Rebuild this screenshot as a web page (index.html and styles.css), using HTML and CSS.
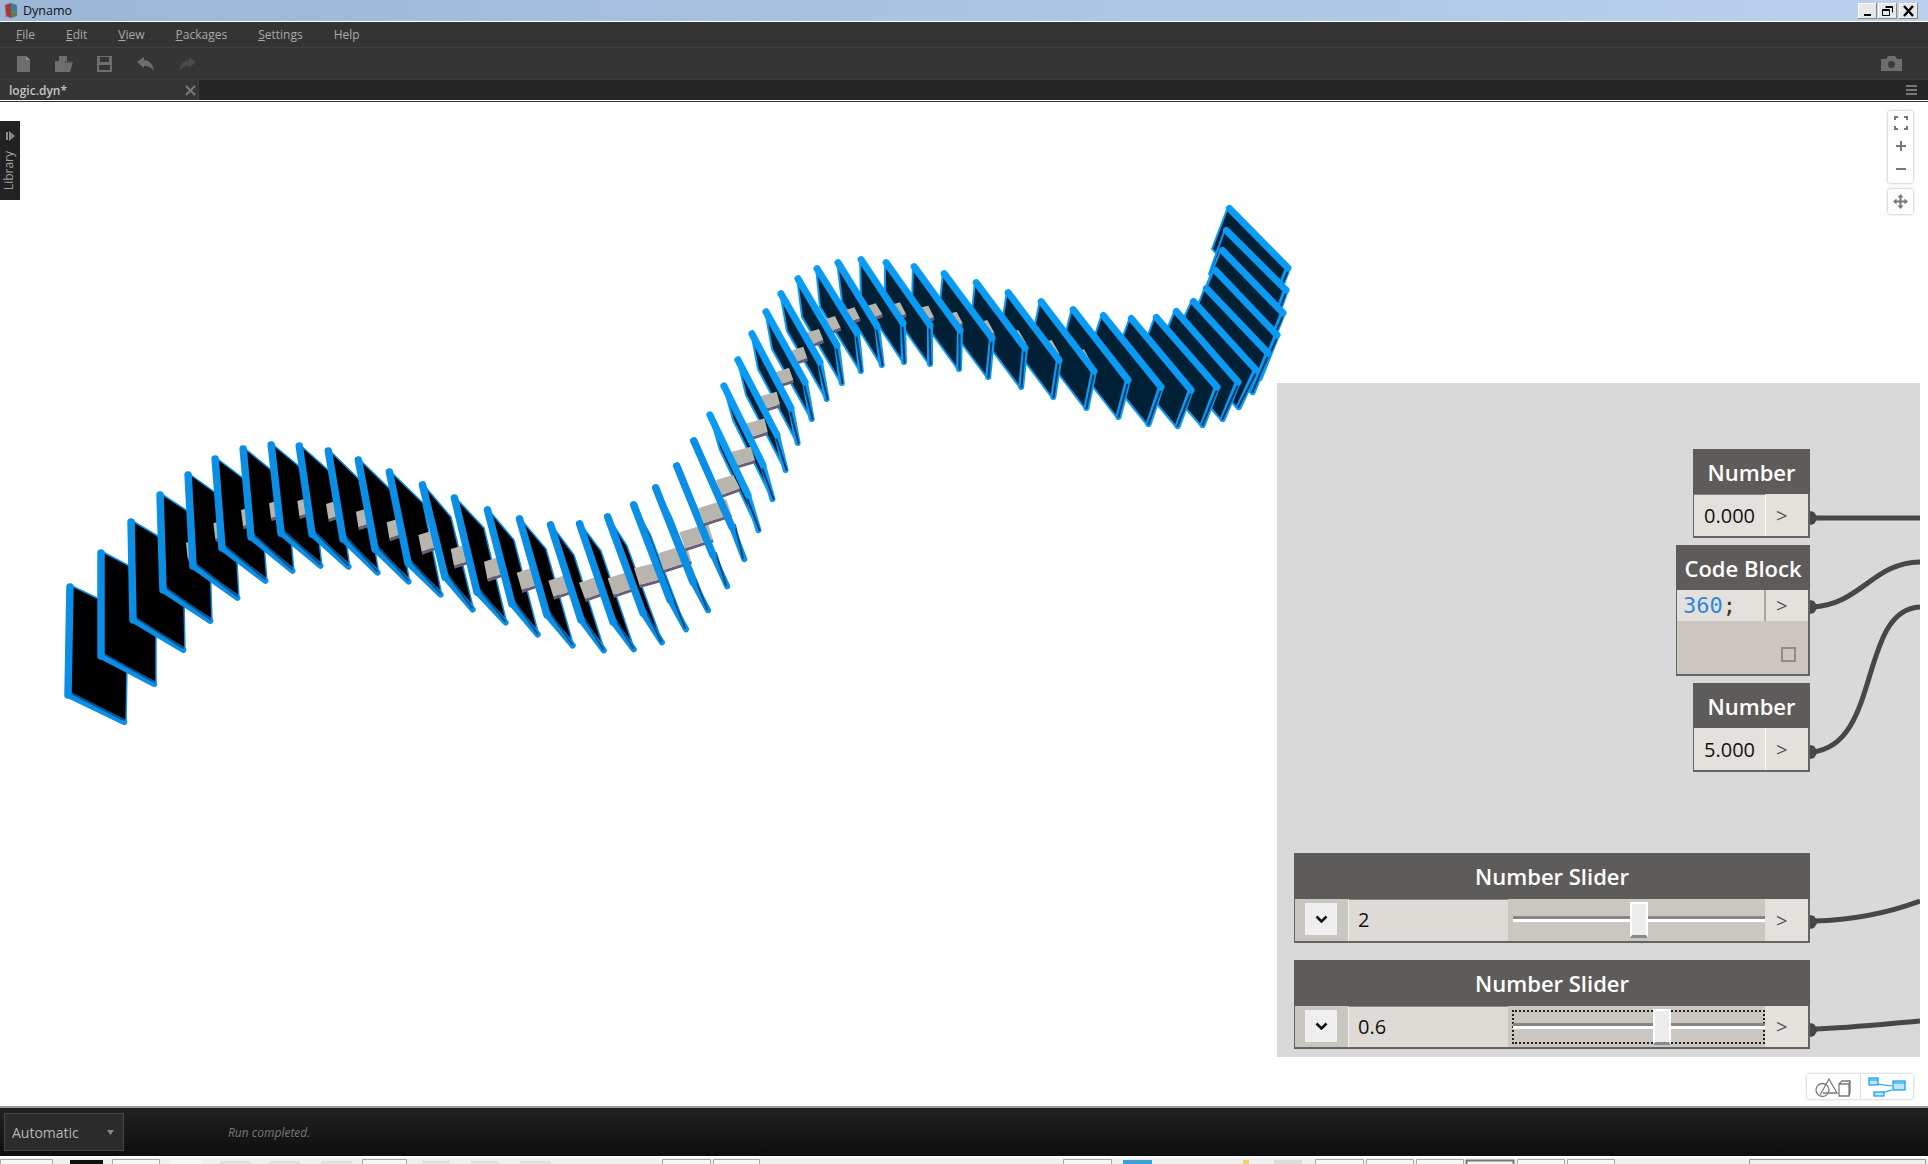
FILE: index.html
```html
<!DOCTYPE html>
<html lang="en">
<head>
    <meta charset="UTF-8">
    <title>Dynamo</title>
    <link rel="stylesheet" href="styles.css">
</head>
<body>

    <div class="titlebar">
        <svg class="app-icon" width="14" height="16" viewBox="0 0 14 16">
            <polygon points="0,2 6,0 6,15 1,13" fill="#a83a3a"/>
            <polygon points="6,0 12,2 12,8 6,9" fill="#3c7f9c"/>
            <polygon points="6,9 12,8 12,13 6,15" fill="#5d7a58"/>
            <circle cx="1" cy="13" r="1" fill="#e05a5a"/>
            <circle cx="12" cy="2" r="1" fill="#7ab5e0"/>
        </svg>
        <span class="app-name">Dynamo</span>
        <div class="win-btns">
            <div class="win-btn"><svg width="17" height="14" viewBox="0 0 17 14"><rect x="5" y="10" width="7" height="2" fill="#000"/></svg></div>
            <div class="win-btn"><svg width="17" height="14" viewBox="0 0 17 14"><path d="M6.500 2.500h7v6M3.500 5.500h7v6h-7z M3.500 6.500h7 M6.500 3.500h7" fill="none" stroke="#000"/></svg></div>
            <div class="win-btn win-close"><svg width="17" height="14" viewBox="0 0 17 14"><path d="M4 2l9 10M13 2l-9 10" stroke="#000" stroke-width="2.400"/></svg></div>
        </div>
    </div>

    <div class="menubar">
        <span class="menu-item"><u>F</u>ile</span>
        <span class="menu-item"><u>E</u>dit</span>
        <span class="menu-item"><u>V</u>iew</span>
        <span class="menu-item"><u>P</u>ackages</span>
        <span class="menu-item"><u>S</u>ettings</span>
        <span class="menu-item">Help</span>
    </div>

    <div class="toolbar">
        <svg class="tool" width="14" height="16" viewBox="0 0 14 16"><path d="M0 0h9l4 4v12H0z" fill="#6e6e6e"/><path d="M9 0l4 4H9z" fill="#8c8c8c"/></svg>
        <svg class="tool" width="20" height="16" viewBox="0 0 20 16"><path d="M5 0h8v5h4l2 1-3 10H1V5h4z" fill="#6e6e6e"/><path d="M11 6h8" stroke="#353535"/></svg>
        <svg class="tool" width="16" height="16" viewBox="0 0 16 16"><path d="M0 0h15v16H0z" fill="#6e6e6e"/><rect x="3" y="1" width="9" height="5" fill="#353535"/><rect x="2" y="9" width="11" height="5" fill="#353535"/></svg>
        <svg class="tool tool-undo" width="18" height="14" viewBox="0 0 18 14"><path d="M0 5l7-5v3c5 0 9 4 10 11-3-4-6-5-10-5v2z" fill="#6e6e6e"/></svg>
        <svg class="tool" width="18" height="14" viewBox="0 0 18 14"><path d="M18 5l-7-5v3C6 3 2 7 1 14c3-4 6-5 10-5v2z" fill="#4a4a4a"/></svg>
        <svg class="camera" width="21" height="15" viewBox="0 0 21 15"><path d="M0 3h5l2-3h7l2 3h5v12H0z" fill="#6e6e6e"/><circle cx="10.500" cy="8.500" r="3.400" fill="#3a3a3a"/></svg>
    </div>

    <div class="tabrow">
        <div class="tab">
            <span class="tab-name">logic.dyn*</span>
            <svg width="11" height="11" viewBox="0 0 11 11"><path d="M1 1l9 9M10 1l-9 9" stroke="#7a7a7a" stroke-width="2"/></svg>
        </div>
        <svg class="tab-menu" width="11" height="10" viewBox="0 0 11 10"><path d="M0 1h11M0 5h11M0 9h11" stroke="#777" stroke-width="2"/></svg>
    </div>
    <div class="tabline"></div>

    <div class="canvas">
        <svg id="scene" class="scene" viewBox="0 102 1928 1004"></svg>

        <div class="library">
            <svg width="9" height="10" viewBox="0 0 9 10"><path d="M0 1h2v8H0zM3 0l6 5-6 5z" fill="#8a8a8a"/></svg>
            <span class="library-label">Library</span>
        </div>

        <div class="zoom-box zoom-main">
            <svg width="14" height="14" viewBox="0 0 14 14"><path d="M1 4V1h3M10 1h3v3M13 10v3h-3M4 13H1v-3" fill="none" stroke="#777" stroke-width="2"/></svg>
            <svg width="12" height="12" viewBox="0 0 12 12"><path d="M6 1v10M1 6h10" stroke="#777" stroke-width="2"/></svg>
            <svg width="12" height="12" viewBox="0 0 12 12"><path d="M1 6h10" stroke="#777" stroke-width="2"/></svg>
        </div>
        <div class="zoom-box zoom-pan">
            <svg width="15" height="15" viewBox="0 0 15 15"><path d="M7.500 0l3 3.500h-2V6.500h3v-2l3.500 3-3.500 3v-2h-3v3h2l-3 3.500-3-3.500h2v-3h-3v2L0 7.500l3.500-3v2h3v-3h-2z" fill="#777"/></svg>
        </div>

        <div class="workspace">
            <svg class="wires" viewBox="1277 383 643 674">
                <g fill="none" stroke="#474747" stroke-width="5">
                    <path d="M1812 518H1920"/>
                    <path d="M1812 607C1862 604 1872 563 1920 562"/>
                    <path d="M1812 752C1882 745 1858 610 1920 607"/>
                    <path d="M1814 921C1850 920 1885 914 1920 901"/>
                    <path d="M1814 1029C1850 1028 1885 1024 1920 1021"/>
                </g>
                <g fill="#474747">
                    <path d="M1810 511l4 1 4 6-4 6-4 1z"/>
                    <path d="M1810 600l4 1 4 6-4 6-4 1z"/>
                    <path d="M1810 745l4 1 4 6-4 6-4 1z"/>
                    <path d="M1810 915l4 1 4 6-4 6-4 1z"/>
                    <path d="M1810 1023l4 1 4 6-4 6-4 1z"/>
                </g>
            </svg>

            <div class="node node-number number-a">
                <div class="node-head">Number</div>
                <div class="node-body">
                    <div class="node-value">0.000</div>
                    <div class="node-port">&gt;</div>
                </div>
            </div>

            <div class="node node-code">
                <div class="node-head">Code Block</div>
                <div class="code-row">
                    <div class="code-text"><span class="code-num">360</span>;</div>
                    <div class="node-port">&gt;</div>
                </div>
                <div class="code-foot"><div class="code-check"></div></div>
            </div>

            <div class="node node-number number-b">
                <div class="node-head">Number</div>
                <div class="node-body">
                    <div class="node-value">5.000</div>
                    <div class="node-port">&gt;</div>
                </div>
            </div>

            <div class="node node-slider slider-a">
                <div class="node-head">Number Slider</div>
                <div class="slider-body">
                    <div class="slider-drop">
                        <div class="drop-btn"><svg width="13" height="9" viewBox="0 0 13 9"><path d="M1.500 1.500l5 5 5-5" fill="none" stroke="#111" stroke-width="2.600"/></svg></div>
                    </div>
                    <div class="slider-value">2</div>
                    <div class="slider-track">
                        <div class="track-line"></div>
                        <div class="thumb thumb-a"></div>
                    </div>
                    <div class="node-port">&gt;</div>
                </div>
            </div>

            <div class="node node-slider slider-b">
                <div class="node-head">Number Slider</div>
                <div class="slider-body">
                    <div class="slider-drop">
                        <div class="drop-btn"><svg width="13" height="9" viewBox="0 0 13 9"><path d="M1.500 1.500l5 5 5-5" fill="none" stroke="#111" stroke-width="2.600"/></svg></div>
                    </div>
                    <div class="slider-value">0.6</div>
                    <div class="slider-track">
                        <div class="track-focus"></div>
                        <div class="track-line"></div>
                        <div class="thumb thumb-b"></div>
                    </div>
                    <div class="node-port">&gt;</div>
                </div>
            </div>
        </div>

        <div class="view-toggle">
            <div class="toggle-cell">
                <svg width="36" height="22" viewBox="0 0 36 22"><g fill="none" stroke="#7a7a7a" stroke-width="1.300"><circle cx="7.500" cy="14" r="6.500"/><path d="M5 19L14 3l8 14H8"/><path d="M24 8h10v12H24zM24 8l3-3h8v12l-1 3M34 8l1-3"/></g></svg>
            </div>
            <div class="toggle-cell">
                <svg width="38" height="20" viewBox="0 0 38 20"><g stroke="#0a9bf5" stroke-width="1.200" fill="#bfe3fb"><path d="M9 7L24 9M10 17L24 13" fill="none"/><rect x="1" y="1" width="9" height="7"/><rect x="25" y="4" width="12" height="9"/><rect x="6" y="15" width="10" height="4"/><path d="M1 3h9M25 6h12" fill="none"/></g></svg>
            </div>
        </div>
    </div>

    <div class="statusbar">
        <div class="run-select">
            <span>Automatic</span>
            <svg width="7" height="5" viewBox="0 0 7 5"><path d="M0 0h7L3.500 5z" fill="#888"/></svg>
        </div>
        <span class="run-status">Run completed.</span>
    </div>

    <div class="taskstrip">
        <svg width="1928" height="6" viewBox="0 1158 1928 6">
            <g fill="#e2e2e2">
                <rect x="170" y="1160" width="32" height="4" fill="#f6f6f6"/>
                <rect x="220" y="1161" width="31" height="3"/>
                <rect x="269" y="1161" width="31" height="3"/>
                <rect x="321" y="1161" width="31" height="3"/>
                <rect x="422" y="1161" width="28" height="3"/>
                <rect x="471" y="1161" width="28" height="3"/>
                <rect x="520" y="1161" width="31" height="3"/>
                <rect x="1274" y="1160" width="28" height="4" fill="#dcdcdc"/>
            </g>
            <g fill="#f6f6f6" stroke="#a8a8a8">
                <path d="M0.500 1164v-4.500h52v4.500"/>
                <path d="M112.500 1164v-4.500h47v4.500"/>
                <path d="M362.500 1164v-4.500h44v4.500"/>
                <path d="M662.500 1164v-4.500h48v4.500"/>
                <path d="M713.500 1164v-4.500h46v4.500"/>
                <path d="M1063.500 1164v-4.500h48v4.500"/>
                <path d="M1315.500 1164v-4.500h48v4.500"/>
                <path d="M1366.500 1164v-4.500h47v4.500"/>
                <path d="M1416.500 1164v-4.500h47v4.500"/>
                <path d="M1466.500 1164v-3.500h47v3.500" stroke="#777" stroke-width="2"/>
                <path d="M1517.500 1164v-4.500h47v4.500"/>
                <path d="M1567.500 1164v-4.500h47v4.500"/>
                <path d="M1749.500 1164v-4.500h176v4.500" fill="#f0f0f0" stroke="#999"/>
            </g>
            <rect x="70" y="1160" width="33" height="4" fill="#111"/>
            <rect x="1123" y="1160" width="29" height="4" fill="#3ba0dc"/>
            <rect x="1243" y="1160" width="6" height="4" fill="#f2d25a"/>
        </svg>
    </div>

    <script src="scene.js"></script>
</body>
</html>
```

FILE: styles.css
```css
body {
    margin: 0;
    width: 1928px;
    height: 1164px;
    overflow: hidden;
    display: flex;
    flex-direction: column;
    background-color: #ffffff;
    font-family: "Open Sans", sans-serif;
}

/* --- window chrome --- */
.titlebar {
    height: 21px;
    flex: none;
    display: flex;
    align-items: center;
    padding-left: 5px;
    background: linear-gradient(to right, #9bb6d6, #b9d1ec);
    border-bottom: 1px solid #ffffff;
}

.app-name {
    margin-left: 4px;
    font-size: 12.5px;
    color: #111111;
}

.win-btns {
    margin-left: auto;
    margin-right: 10px;
    display: flex;
    gap: 1px;
}

.win-btn {
    width: 19px;
    height: 16px;
    display: flex;
    align-items: center;
    justify-content: center;
    background-color: #e6e8ea;
    box-shadow: inset -1px -1px 0 #8a8a8a, inset 1px 1px 0 #ffffff;
}

.win-close {
    margin-left: 1px;
}

.menubar {
    height: 25px;
    flex: none;
    display: flex;
    align-items: center;
    gap: 31px;
    padding-left: 16px;
    background-color: #343434;
    border-bottom: 1px solid #3f3f3f;
    font-size: 12px;
    color: #a8a8a8;
}

.toolbar {
    height: 31px;
    flex: none;
    display: flex;
    align-items: center;
    padding-left: 17px;
    gap: 23px;
    background-color: #353535;
    border-bottom: 1px solid #3c3c3c;
}

.tool-undo {
    margin-left: 1px;
}

.camera {
    margin-left: auto;
    margin-right: 26px;
}

.tabrow {
    height: 20px;
    flex: none;
    display: flex;
    align-items: center;
    justify-content: space-between;
    background-color: #262626;
}

.tab {
    width: 199px;
    height: 20px;
    display: flex;
    align-items: center;
    justify-content: space-between;
    padding: 0 2px 0 9px;
    box-sizing: border-box;
    background-color: #353535;
    border-right: 1px solid #3f3f3f;
}

.tab-name {
    font-size: 12px;
    font-weight: 600;
    color: #c4c4c4;
}

.tab-menu {
    margin-right: 11px;
}

.tabline {
    height: 1px;
    flex: none;
    background-color: #ffffff;
    border-bottom: 1px solid #333333;
}

/* --- canvas --- */
.canvas {
    position: relative;
    height: 1004px;
    flex: none;
    overflow: hidden;
    background-color: #ffffff;
    border-bottom: 2px solid #999999;
}

.scene {
    position: absolute;
    left: 0;
    top: 0;
    width: 1928px;
    height: 1004px;
}

.library {
    position: absolute;
    left: 0;
    top: 19px;
    width: 20px;
    height: 79px;
    background-color: #222222;
    display: flex;
    flex-direction: column;
    align-items: center;
    padding-top: 10px;
    box-sizing: border-box;
    gap: 10px;
}

.library-label {
    writing-mode: vertical-rl;
    transform: rotate(180deg);
    font-size: 12px;
    line-height: 14px;
    margin-right: 2px;
    color: #a0a0a0;
}

.zoom-box {
    position: absolute;
    left: 1888px;
    width: 25px;
    box-sizing: border-box;
    background-color: #ffffff;
    border-radius: 2px;
    box-shadow: 0 0 3px rgba(0, 0, 0, 0.35);
    display: flex;
    flex-direction: column;
    align-items: center;
}

.zoom-main {
    top: 9px;
    height: 72px;
    justify-content: space-around;
    padding-bottom: 3px;
}

.zoom-pan {
    top: 87px;
    height: 25px;
    justify-content: center;
}

.view-toggle {
    position: absolute;
    left: 1807px;
    top: 972px;
    width: 106px;
    height: 25px;
    display: flex;
    background-color: #ffffff;
    border-radius: 3px;
    box-shadow: 0 0 3px rgba(0, 0, 0, 0.3);
}

.toggle-cell {
    flex: 1;
    display: flex;
    align-items: center;
    justify-content: center;
}

.toggle-cell + .toggle-cell {
    border-left: 1px solid #dddddd;
}

/* --- graph nodes --- */
.workspace {
    position: absolute;
    left: 1277px;
    top: 281px;
    width: 643px;
    height: 674px;
    overflow: hidden;
    background-color: #d9d9d9;
}

.wires {
    position: absolute;
    left: 0;
    top: 0;
    width: 643px;
    height: 674px;
}

.node {
    position: absolute;
    display: flex;
    flex-direction: column;
    box-sizing: border-box;
    background-color: #e4e1dc;
    border: 2px solid #666462;
    border-top: none;
    border-left-width: 1px;
}

.node-head {
    flex: none;
    margin: 0 -2px 0 -1px;
    display: flex;
    align-items: center;
    justify-content: center;
    background-color: #5e5c5a;
    color: #ffffff;
    font-size: 22px;
    font-weight: 600;
}

.node-number {
    left: 416px;
    width: 117px;
    height: 89px;
}

.number-a { top: 66px; }
.number-b { top: 300px; }

.node-number .node-head { height: 45px; }

.node-body {
    flex: 1;
    display: flex;
}

.node-value {
    width: 72px;
    flex: none;
    display: flex;
    align-items: center;
    justify-content: center;
    box-sizing: border-box;
    border-right: 1px solid #ffffff;
    font-size: 20px;
    color: #111111;
}

.number-a .node-value {
    border-top: 1px solid #8a8884;
}

.node-port {
    flex: 1;
    display: flex;
    align-items: center;
    padding-left: 10px;
    font-size: 20px;
    color: #555555;
}

.node-code {
    left: 399px;
    top: 162px;
    width: 134px;
    height: 131px;
    background-color: #cbc7c0;
}

.node-code .node-head { height: 45px; }

.code-row {
    height: 31px;
    flex: none;
    display: flex;
    background-color: #e4e1dc;
}

.code-text {
    width: 89px;
    flex: none;
    padding-left: 6px;
    box-sizing: border-box;
    border-right: 2px solid #a8a6a2;
    font-family: "DejaVu Sans Mono", monospace;
    font-size: 22px;
    line-height: 32px;
    color: #333333;
}

.code-num {
    color: #2d86e0;
}

.code-foot {
    flex: 1;
    display: flex;
    align-items: flex-end;
    justify-content: flex-end;
    padding: 0 12px 12px 0;
}

.code-check {
    width: 11px;
    height: 11px;
    border: 2px solid #8f8c87;
}

.node-slider {
    left: 17px;
    width: 516px;
    height: 90px;
}

.slider-a { top: 470px; }
.slider-b { top: 577px; height: 89px; }

.node-slider .node-head { height: 46px; }

.slider-body {
    flex: 1;
    display: flex;
}

.slider-body .node-port {
    padding-left: 11px;
}

.slider-drop {
    width: 53px;
    flex: none;
    padding: 4px 0 0 10px;
    box-sizing: border-box;
    background-color: #c9c6bf;
}

.drop-btn {
    width: 32px;
    height: 32px;
    display: flex;
    align-items: center;
    justify-content: center;
    background-color: #efefef;
}

.slider-value {
    width: 160px;
    flex: none;
    padding-left: 9px;
    box-sizing: border-box;
    background-color: #dedbd6;
    border-left: 1px solid #f4f2ee;
    border-top: 1px solid #8a8884;
    font-size: 20px;
    line-height: 40px;
    color: #111111;
}

.slider-track {
    position: relative;
    width: 257px;
    flex: none;
    background-color: #cbc7c0;
}

.track-line {
    position: absolute;
    left: 5px;
    right: 0;
    top: 17px;
    height: 3px;
    background-color: #858585;
    border-bottom: 3px solid #ffffff;
}

.track-focus {
    position: absolute;
    left: 4px;
    right: 0;
    top: 4px;
    height: 34px;
    box-sizing: border-box;
    border: 2px dotted #222222;
}

.thumb {
    position: absolute;
    top: 3px;
    width: 18px;
    height: 36px;
    box-sizing: border-box;
    background-color: #ececec;
    border: 2px solid #ffffff;
    border-bottom: 3px solid #8a8a8a;
}

.thumb-a { left: 122px; }
.thumb-b { left: 145px; }

/* --- bottom --- */
.statusbar {
    height: 48px;
    flex: none;
    display: flex;
    align-items: center;
    background: linear-gradient(to bottom, #212121, #0e0e0e);
}

.run-select {
    width: 120px;
    height: 38px;
    margin-left: 4px;
    box-sizing: border-box;
    padding: 0 9px 0 7px;
    display: flex;
    align-items: center;
    justify-content: space-between;
    background-color: #2b2b2b;
    border: 1px solid #454545;
    font-size: 14px;
    color: #b4b4b4;
}

.run-status {
    margin-left: 104px;
    font-size: 12px;
    font-style: italic;
    color: #777777;
}

.taskstrip {
    height: 8px;
    flex: none;
    background-color: #f0f0f0;
    border-top: 2px solid #ffffff;
    box-sizing: border-box;
}

.taskstrip svg {
    display: block;
}
```

FILE: scene.js
```js
// corners read off the picture: [A, B, C] for the ones seen from the left,
// [A, D, C] for the ones seen from the right
var leftPanels = [
    [70,585, 68,695, 126,723], [101,551, 101,656, 156,685], [131,520, 133,620, 185,651],
    [160,493, 163,590, 212,622], [188,473, 193,566, 239,599], [215,457, 222,548, 267,582],
    [243,447, 251,537, 294,572], [271,443, 281,533, 322,567], [299,444, 312,534, 350,568],
    [328,449, 343,539, 379,574], [358,458, 375,549, 410,583], [389,470, 408,563, 442,596],
    [422,483, 445,577, 474,611], [454,496, 477,592, 507,624], [487,508, 512,604, 539,636],
    [519,517, 547,615, 574,647], [550,523, 581,620, 605,652], [579,522, 613,622, 635,651],
    [607,515, 643,613, 663,644], [633,503, 670,600, 687,631], [655,486, 693,582, 709,612],
    [676,464, 713,555, 728,588], [693,439, 732,527, 745,561]
];

var rightPanels = [
    [709,413, 748,495, 759,532], [723,384, 763,465, 773,501], [737,358, 777,435, 786,472],
    [751,332, 791,408, 798,445], [765,310, 805,382, 812,421], [780,292, 820,362, 827,401],
    [797,277, 837,345, 842,385], [816,267, 857,333, 861,373], [837,261, 877,326, 882,367],
    [860,258, 903,323, 904,364], [885,261, 930,325, 930,366], [913,265, 960,330, 959,371],
    [943,272, 992,338, 988,379], [975,281, 1025,348, 1021,389], [1007,291, 1059,360, 1053,399],
    [1040,300, 1094,371, 1086,410], [1072,308, 1128,380, 1118,419], [1102,314, 1161,387, 1148,426],
    [1130,317, 1191,390, 1177,428], [1155,316, 1217,387, 1202,427], [1175,310, 1238,382, 1222,421],
    [1192,300, 1256,370, 1238,409], [1205,287, 1268,353, 1252,394], [1214,269, 1277,335, 1259,380],
    [1221,249, 1283,313, 1265,358], [1225,229, 1286,290, 1270,335], [1228,207, 1288,268, 1272,310]
];

// visible pieces of the bar, top-left, top-right, bottom-right, bottom-left, in 3x crop units
function crop(ox, oy, q) {
    var r = [];
    for (var k = 0; k < 8; k += 2) r.push([ox + q[k] / 3, oy + q[k + 1] / 3]);
    return r;
}

// index = number of the left panel the piece follows
var leftBeams = {
    3: crop(40, 420, [438,368, 450,365, 455,412, 443,415]),
    4: crop(40, 420, [520,310, 535,305, 540,352, 526,357]),
    5: crop(40, 420, [603,270, 622,264, 628,313, 609,319]),
    6: crop(40, 420, [687,250, 710,243, 716,288, 693,295]),
    7: crop(40, 420, [772,243, 797,235, 804,280, 778,288]),
    8: crop(40, 420, [858,252, 888,242, 894,287, 865,297]),
    9: crop(40, 420, [948,275, 982,265, 990,310, 955,322]),
    10: crop(40, 420, [1040,307, 1078,295, 1086,342, 1048,355]),
    11: crop(40, 420, [1135,345, 1175,333, 1185,380, 1145,395]),
    12: crop(40, 420, [1232,387, 1275,375, 1283,423, 1242,437]),
    13: crop(40, 420, [1332,425, 1375,410, 1385,460, 1342,477]),
    14: crop(500, 400, [50,518, 95,503, 105,555, 65,570]),
    15: crop(500, 400, [145,542, 195,525, 205,575, 160,590]),
    16: crop(500, 400, [237,548, 295,528, 305,577, 255,597]),
    17: crop(500, 400, [323,535, 385,515, 395,565, 340,585]),
    18: crop(500, 400, [402,505, 465,490, 475,540, 418,555]),
    19: crop(500, 400, [475,460, 535,440, 550,490, 490,510]),
    20: crop(500, 400, [538,397, 600,378, 615,425, 555,445]),
    21: crop(500, 400, [595,325, 655,305, 670,350, 610,370])
};

var middleBeam = crop(500, 400, [648,240, 700,225, 720,265, 663,285]);

// index = number of the right panel the piece follows
var rightBeams = [
    crop(500, 400, [695,155, 752,140, 765,180, 710,197]),
    crop(720, 245, [80,535, 133,520, 143,560, 92,577]),
    crop(720, 245, [122,453, 170,440, 180,478, 135,492]),
    crop(720, 245, [165,383, 207,368, 220,405, 178,418]),
    crop(720, 245, [210,318, 250,305, 262,340, 225,350]),
    crop(720, 245, [262,262, 297,252, 310,285, 280,298]),
    crop(720, 245, [318,222, 345,213, 362,248, 335,258]),
    crop(720, 245, [378,195, 403,187, 420,220, 395,230]),
    crop(720, 245, [445,182, 467,175, 487,208, 465,218]),
    crop(880, 240, [45,190, 60,187, 78,222, 68,228]),
    crop(880, 240, [125,200, 145,197, 162,232, 148,238]),
    crop(880, 240, [215,218, 230,215, 248,250, 235,255]),
    crop(880, 240, [310,242, 322,240, 343,278, 330,282]),
    crop(880, 240, [405,272, 415,270, 438,308, 425,312]),
    crop(880, 240, [505,302, 515,300, 538,340, 525,345]),
    crop(880, 240, [600,330, 612,328, 635,370, 622,372])
];

var blue = "#0a8ee6";
var out = "";

function pts(list) {
    return list.map(function (p) { return p[0] + "," + p[1]; }).join(" ");
}

function line(a, b, color, width) {
    out += '<line x1="' + a[0] + '" y1="' + a[1] + '" x2="' + b[0] + '" y2="' + b[1] +
           '" stroke="' + color + '" stroke-width="' + width + '" stroke-linecap="round"/>';
}

// moves a towards b, so the round cap ends on the corner
function inset(a, b, k) {
    var x = b[0] - a[0], y = b[1] - a[1], len = Math.sqrt(x * x + y * y);
    return [a[0] + x / len * k, a[1] + y / len * k];
}

function leftPanel(p) {
    var a = [p[0], p[1]], b = [p[2], p[3]], c = [p[4], p[5]];
    var d = [a[0] + c[0] - b[0], a[1] + c[1] - b[1]];
    out += '<polygon points="' + pts([a, b, c, d]) + '" fill="#000" stroke="' + blue + '" stroke-width="1.5" stroke-linejoin="round"/>';
    line(b, inset(c, b, 2), blue, 6);
    line([b[0] + 3, b[1] - 2], [c[0] - 2, c[1] - 3], "#0a4f88", 2);
    line(inset(a, b, 2), b, blue, 7.5);
}

function rightPanel(p) {
    var a = [p[0], p[1]], d = [p[2], p[3]], c = [p[4], p[5]];
    var b = [a[0] + c[0] - d[0], a[1] + c[1] - d[1]];
    out += '<polygon points="' + pts([a, b, c, d]) + '" fill="#002036" stroke="#0a9bf5" stroke-width="2" stroke-linejoin="round"/>';
    line(d, inset(c, d, 2), "#0a9bf5", 6);
    line([d[0] - 0.5, d[1] + 4], [c[0] + 0.5, c[1] - 2], "#003a66", 2);
    line(inset(a, d, 2), d, "#0a9bf5", 7);
}

// dx0 / dx1 push the hidden end of a piece under the panel that covers it
function beam(q, dx0, dx1) {
    var tl = [q[0][0] - dx0, q[0][1] + dx0 * 0.3], tr = [q[1][0] + dx1, q[1][1] - dx1 * 0.3];
    var br = [q[2][0] + dx1, q[2][1] - dx1 * 0.3], bl = [q[3][0] - dx0, q[3][1] + dx0 * 0.3];
    out += '<polygon points="' + pts([bl, br, [br[0] + 0.5, br[1] + 3], [bl[0] + 0.5, bl[1] + 3]]) + '" fill="#6b5c78"/>';
    out += '<polygon points="' + pts([tl, tr, br, bl]) + '" fill="#b8b4ae"/>';
}

// drawn from both ends towards the middle, the nearest panels go last
for (var i = rightPanels.length - 1; i >= 0; i--) {
    rightPanel(rightPanels[i]);
    if (i > 0 && rightBeams[i - 1]) beam(rightBeams[i - 1], 8, 0);
}

beam(middleBeam, 0, 0);

for (var j = 0; j < leftPanels.length; j++) {
    leftPanel(leftPanels[j]);
    if (leftBeams[j]) beam(leftBeams[j], 0, 8);
}

document.getElementById("scene").innerHTML = out;
```
